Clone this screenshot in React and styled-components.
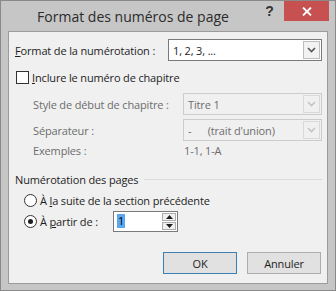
import React from 'react';
import styled, {createGlobalStyle} from 'styled-components';

const GlobalStyle = createGlobalStyle`
  html, body {
    margin: 0;
    padding: 0;
    background: #ffffff;
  }
  * {
    box-sizing: border-box;
  }
`;

const Window = styled.div`
  width: 336px;
  height: 291px;
  display: flex;
  flex-direction: column;
  background: #c6c6c6;
  border: 1px solid #8a8a8a;
  font-family: 'Open Sans', 'Noto Sans', sans-serif;
  font-size: 11px;
  letter-spacing: -0.15px;
  color: #1e1e1e;
`;

const TitleBar = styled.div`
  height: 30px;
  display: flex;
  align-items: flex-start;
  padding-right: 6px;
`;

const Title = styled.div`
  flex: 1;
  height: 30px;
  display: flex;
  align-items: center;
  justify-content: center;
  padding-left: 10px;
  font-size: 14px;
  letter-spacing: 0;
  color: #2b2b2b;
`;

const HelpButton = styled.div`
  width: 29px;
  height: 20px;
  display: flex;
  align-items: center;
  justify-content: center;
  font-family: 'Liberation Sans', sans-serif;
  font-weight: bold;
  font-size: 14px;
  color: #333;
`;

const CloseButton = styled.div`
  width: 45px;
  height: 20px;
  display: flex;
  align-items: center;
  justify-content: center;
  background: #c75050;
`;

const Content = styled.div`
  flex: 1;
  margin: 0 7px 6px;
  background: #f0f0f0;
  border: 1px solid #9b9b9b;
  padding: 7px 5px 0 6px;
  display: flex;
  flex-direction: column;
`;

const Row = styled.div`
  display: flex;
  align-items: center;
  height: ${p => p.h || 22}px;
  margin-top: ${p => p.mt || 0}px;
  padding-left: ${p => p.indent || 0}px;
`;

const Label = styled.span`
  color: ${p => (p.disabled ? '#6d6d6d' : '#1e1e1e')};
  width: ${p => (p.w ? `${p.w}px` : 'auto')};
  flex-shrink: 0;
  white-space: nowrap;
`;

const Key = styled.span`
  text-decoration: underline;
  text-underline-offset: 1px;
`;

const Select = styled.div`
  margin-left: auto;
  width: ${p => p.w}px;
  height: 22px;
  display: flex;
  align-items: stretch;
  background: ${p => (p.disabled ? '#f0f0f0' : '#ffffff')};
  border: 1px solid ${p => (p.disabled ? '#cccccc' : '#7a7a7a')};
  color: ${p => (p.disabled ? '#6d6d6d' : '#1e1e1e')};
`;

const SelectText = styled.div`
  flex: 1;
  display: flex;
  align-items: center;
  padding-left: 4px;
  white-space: pre;
`;

const SelectArrow = styled.div`
  width: 17px;
  display: flex;
  align-items: center;
  justify-content: center;
  margin: 1px;
  background: ${p => (p.disabled ? '#f0f0f0' : '#f2f2f2')};
  border: 1px solid ${p => (p.disabled ? '#d9d9d9' : '#bdbdbd')};
`;

const Check = styled.div`
  width: 13px;
  height: 13px;
  margin-left: 1px;
  margin-right: 3px;
  background: #ffffff;
  border: 1px solid #333333;
`;

const Radio = styled.div`
  width: 13px;
  height: 13px;
  margin-right: 3px;
  border-radius: 50%;
  background: #ffffff;
  border: 1px solid #333333;
  display: flex;
  align-items: center;
  justify-content: center;
  &::after {
    content: '';
    display: ${p => (p.checked ? 'block' : 'none')};
    width: 5px;
    height: 5px;
    border-radius: 50%;
    background: #1e1e1e;
  }
`;

const Examples = styled.div`
  display: grid;
  grid-template-columns: 1fr 138px;
  align-items: center;
  height: 16px;
  margin-top: 1px;
  padding-left: 18px;
  color: #6d6d6d;
`;

const GroupHeader = styled.div`
  display: flex;
  align-items: center;
  gap: 6px;
  height: 16px;
  margin-top: 13px;
  &::after {
    content: '';
    flex: 1;
    height: 1px;
    background: #dcdcdc;
  }
`;

const Spin = styled.div`
  width: 65px;
  height: 21px;
  display: flex;
  background: #ffffff;
  border: 1px solid #7a7a7a;
`;

const SpinText = styled.div`
  flex: 1;
  display: flex;
  align-items: center;
  padding-left: 3px;
`;

const Selected = styled.span`
  background: #5ba7ef;
  color: #000;
  padding: 0 1px;
  line-height: 14px;
`;

const SpinButtons = styled.div`
  width: 16px;
  display: flex;
  flex-direction: column;
  gap: 1px;
  padding: 1px;
`;

const SpinButton = styled.div`
  flex: 1;
  display: flex;
  align-items: center;
  justify-content: center;
  background: #f0f0f0;
  border: 1px solid #adadad;
`;

const Footer = styled.div`
  display: flex;
  justify-content: flex-end;
  gap: 10px;
  margin-top: 20px;
  padding-right: 1px;
`;

const Button = styled.div`
  width: 74px;
  height: 22px;
  display: flex;
  align-items: center;
  justify-content: center;
  background: #e1e1e1;
  border: 1px solid ${p => (p.primary ? '#3c7fb1' : '#adadad')};
  color: #1e1e1e;
`;

const Chevron = ({color}) => (
  <svg width="9" height="6" viewBox="0 0 9 6">
    <polyline points="1,1 4.5,4.5 8,1" fill="none" stroke={color} strokeWidth="1.6" />
  </svg>
);

const Triangle = ({up}) => (
  <svg width="7" height="4" viewBox="0 0 7 4">
    <polygon points={up ? '0,4 7,4 3.5,0' : '0,0 7,0 3.5,4'} fill="#1e1e1e" />
  </svg>
);

const App = () => {
  return (
    <>
      <GlobalStyle />
      <Window>
        <TitleBar>
          <Title>Format des numéros de page</Title>
          <HelpButton>?</HelpButton>
          <CloseButton>
            <svg width="10" height="9" viewBox="0 0 10 9">
              <path d="M1 0.5 L9 8.5 M9 0.5 L1 8.5" stroke="#ffffff" strokeWidth="1.8" />
            </svg>
          </CloseButton>
        </TitleBar>
        <Content>
          <Row>
            <Label>
              <Key>F</Key>ormat de la numérotation :
            </Label>
            <Select w={154}>
              <SelectText>1, 2, 3, ...</SelectText>
              <SelectArrow>
                <Chevron color="#555555" />
              </SelectArrow>
            </Select>
          </Row>
          <Row h={16} mt={8}>
            <Check />
            <Label>
              <Key>I</Key>nclure le numéro de chapitre
            </Label>
          </Row>
          <Row mt={8} indent={18}>
            <Label disabled>Style de début de chapitre :</Label>
            <Select w={139} disabled>
              <SelectText>Titre 1</SelectText>
              <SelectArrow disabled>
                <Chevron color="#c4c4c4" />
              </SelectArrow>
            </Select>
          </Row>
          <Row mt={4} indent={18}>
            <Label disabled>Séparateur :</Label>
            <Select w={139} disabled>
              <SelectText>{'-      (trait d\'union)'}</SelectText>
              <SelectArrow disabled>
                <Chevron color="#c4c4c4" />
              </SelectArrow>
            </Select>
          </Row>
          <Examples>
            <span>Exemples :</span>
            <span>1-1, 1-A</span>
          </Examples>
          <GroupHeader>Numérotation des pages</GroupHeader>
          <Row h={16} mt={5} indent={9}>
            <Radio />
            <Label>
              À <Key>l</Key>a suite de la section précédente
            </Label>
          </Row>
          <Row mt={2} indent={9}>
            <Radio checked />
            <Label w={73}>
              À <Key>p</Key>artir de :
            </Label>
            <Spin>
              <SpinText>
                <Selected>1</Selected>
              </SpinText>
              <SpinButtons>
                <SpinButton>
                  <Triangle up />
                </SpinButton>
                <SpinButton>
                  <Triangle />
                </SpinButton>
              </SpinButtons>
            </Spin>
          </Row>
          <Footer>
            <Button primary>OK</Button>
            <Button>Annuler</Button>
          </Footer>
        </Content>
      </Window>
    </>
  );
};

export default App;
